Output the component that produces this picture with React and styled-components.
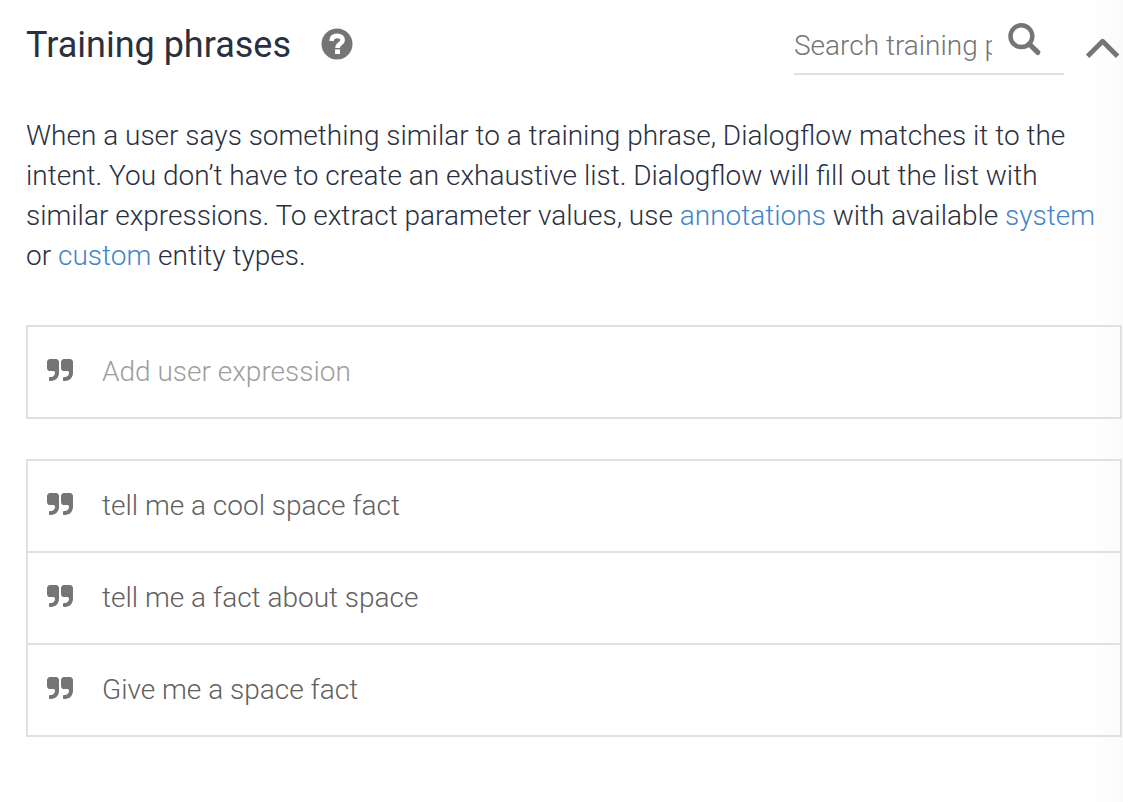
import React from "react";
import styled, { createGlobalStyle } from "styled-components";

const GlobalStyle = createGlobalStyle`
  *, *::before, *::after { box-sizing: border-box; }
  body {
    margin: 0;
    background: #fff;
    color: #2b303f;
    font-family: Roboto, "Liberation Sans", sans-serif;
    font-weight: 300;
  }
`;

const Page = styled.main`
  min-height: 100vh;
  padding: 15px 1px 64px 26px;
  background: linear-gradient(to left, #fafafa, #fff 30px);
`;

const Header = styled.header`
  display: flex;
  align-items: center;
  height: 60px;
`;

const Title = styled.h2`
  margin: 0;
  font-size: 36px;
  line-height: 56px;
  font-weight: 400;
`;

const IconButton = styled.button`
  display: flex;
  padding: 0;
  border: 0;
  background: none;
  color: #757575;
  cursor: pointer;
`;

const HelpButton = styled(IconButton)`
  margin-left: 30px;
  padding-bottom: 2px;
`;

const SearchBox = styled.div`
  display: flex;
  width: 270px;
  height: 60px;
  margin: 0 21px 0 auto;
  gap: 16px;
  border-bottom: 2px solid #e0e0e0;
`;

const SearchButton = styled(IconButton)`
  padding-top: 8px;
`;

const CollapseButton = styled(IconButton)`
  padding: 6px 1px 0 0;
`;

const TextInput = styled.input`
  min-width: 0;
  padding: 0;
  border: 0;
  outline: 0;
  background: transparent;
  color: #616161;
  font: inherit;
  font-size: 28px;
  &::placeholder { color: ${(p) => p.$hint}; opacity: 1; }
`;

const SearchInput = styled(TextInput)`
  width: 198px;
  padding-top: 2px;
`;

const Description = styled.p`
  margin: 41px 0 49px;
  padding-right: 24px;
  font-size: 28px;
  line-height: 40px;
`;

const Link = styled.a`
  color: #4285c8;
  text-decoration: none;
`;

const Panel = styled.div`
  border: 2px solid #e0e0e0;
`;

const PhraseList = styled.ul`
  margin: 40px 0 0;
  padding: 0;
  list-style: none;
  border: 2px solid #e0e0e0;
`;

const Row = styled.div`
  display: flex;
  align-items: center;
  height: 90px;
  gap: 28px;
  padding: 0 18px 2px;
  color: #616161;
  font-size: 28px;
  & > svg { flex: none; color: #757575; }
`;

const Phrase = styled.li`
  & + & { border-top: 2px solid #e0e0e0; }
`;

const ExpressionInput = styled(TextInput)`
  flex: 1;
`;

const QUOTE_MARK =
  "v704q0 104-40.5 198.5t-109.5 163.5-163.5 109.5-198.5 40.5h-64q-26 0-45-19t-19-45v-128q0-26 19-45t45-19h64q106 0 181-75t75-181v-32q0-40-28-68t-68-28h-224q-80 0-136-56t-56-136v-384q0-80 56-136t136-56h384q80 0 136 56t56 136z";

const QuoteIcon = () => (
  <svg width="28" height="28" viewBox="0 0 1792 1792" fill="currentColor" aria-hidden="true">
    <path d={`M832 320${QUOTE_MARK}M1728 320${QUOTE_MARK}`} />
  </svg>
);

const HelpIcon = () => (
  <svg width="32" height="32" viewBox="0 0 32 32" fill="none" aria-hidden="true">
    <circle cx="16" cy="16" r="15.5" fill="currentColor" />
    <path d="M10.4 12.9C10.8 9.3 13 7.9 16.1 7.9C19.4 7.9 21.7 9.4 21.7 12C21.7 15.6 16.5 15.5 16.5 20" stroke="#fff" strokeWidth="4.6" />
    <path d="M14 21.4h5v4.6h-5z" fill="#fff" />
  </svg>
);

const SearchIcon = () => (
  <svg width="34" height="34" viewBox="0 0 34 34" fill="none" stroke="currentColor" aria-hidden="true">
    <circle cx="13.4" cy="13.2" r="10.9" strokeWidth="4.5" />
    <path d="M21.2 21 29.8 29.4" strokeWidth="5.2" strokeLinecap="round" />
  </svg>
);

const ChevronIcon = () => (
  <svg width="36" height="24" viewBox="0 0 36 24" fill="none" stroke="currentColor" strokeWidth="4.8" aria-hidden="true">
    <path d="M2.6 20.2 17.6 5.2 32.6 20.2" strokeLinejoin="round" />
  </svg>
);

const phrases = ["tell me a cool space fact", "tell me a fact about space", "Give me a space fact"];

export default function App() {
  return (
    <Page>
      <GlobalStyle />
      <Header>
        <Title>Training phrases</Title>
        <HelpButton aria-label="Help"><HelpIcon /></HelpButton>
        <SearchBox>
          <SearchInput $hint="#757575" aria-label="Search training phrases" placeholder="Search training phrases" />
          <SearchButton aria-label="Search"><SearchIcon /></SearchButton>
        </SearchBox>
        <CollapseButton aria-label="Collapse"><ChevronIcon /></CollapseButton>
      </Header>
      <Description>
        When a user says something similar to a training phrase, Dialogflow matches it to the intent. You don’t have to
        create an exhaustive list. Dialogflow will fill out the list with similar expressions. To extract parameter
        values, use <Link href="#annotations">annotations</Link> with available <Link href="#system">system</Link> or{" "}
        <Link href="#custom">custom</Link> entity types.
      </Description>
      <Panel>
        <Row>
          <QuoteIcon />
          <ExpressionInput $hint="#9e9e9e" aria-label="Add user expression" placeholder="Add user expression" />
        </Row>
      </Panel>
      <PhraseList>
        {phrases.map((text) => (
          <Phrase key={text}>
            <Row><QuoteIcon />{text}</Row>
          </Phrase>
        ))}
      </PhraseList>
    </Page>
  );
}
